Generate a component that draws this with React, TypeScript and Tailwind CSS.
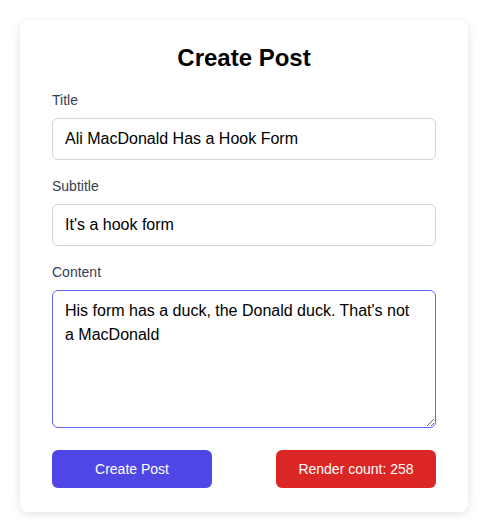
import { useState } from "react";

export default function App() {
  const [title, setTitle] = useState("Ali MacDonald Has a Hook Form");
  const [subtitle, setSubtitle] = useState("It's a hook form");
  const [content, setContent] = useState(
    "His form has a duck, the Donald duck. That's not a MacDonald"
  );

  return (
    <div className="min-h-screen bg-white py-5 font-['Liberation_Sans',Arial,sans-serif]">
      <div className="mx-auto w-[448px] translate-x-px rounded-lg bg-white px-8 pt-[22px] pb-6 shadow-[0_2px_8px_rgba(0,0,0,0.12)]">
        <h1 className="mb-4 text-center text-2xl font-bold text-black">Create Post</h1>

        <label className="mb-2 block text-sm font-medium text-[#374151]">Title</label>
        <input
          className="mb-4 block w-full rounded-md border border-[#d1d5db] px-3 py-2 text-base text-black outline-none"
          value={title}
          onChange={(e) => setTitle(e.target.value)}
        />

        <label className="mb-2 block text-sm font-medium text-[#374151]">Subtitle</label>
        <input
          className="mb-4 block w-full rounded-md border border-[#d1d5db] px-3 py-2 text-base text-black outline-none"
          value={subtitle}
          onChange={(e) => setSubtitle(e.target.value)}
        />

        <label className="mb-2 block text-sm font-medium text-[#374151]">Content</label>
        <textarea
          rows={5}
          className="block w-full rounded-md border border-[#6366f1] py-2 pl-3 pr-5 text-base text-black outline-none"
          value={content}
          onChange={(e) => setContent(e.target.value)}
        />

        <div className="mt-[22px] flex justify-between">
          <button className="h-[38px] w-40 rounded-md bg-[#4f46e5] text-sm font-medium text-white">
            Create Post
          </button>
          <button className="h-[38px] w-40 rounded-md bg-[#dc2626] text-sm text-white">
            Render count: 258
          </button>
        </div>
      </div>
    </div>
  );
}
